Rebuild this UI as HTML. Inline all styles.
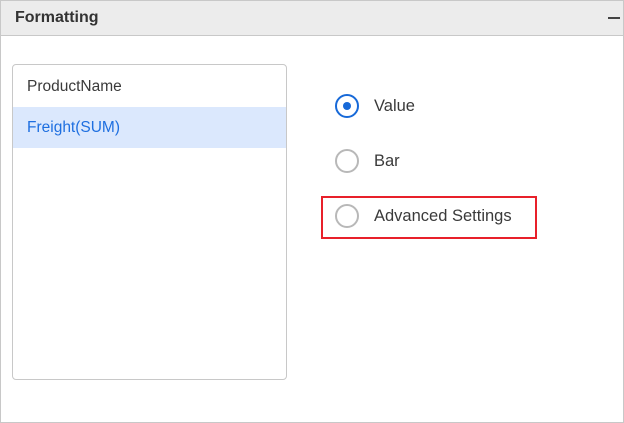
<!DOCTYPE html>
<html><head><style>
body{margin:0;width:624px;height:423px;overflow:hidden;background:#fff;font-family:"Liberation Sans",sans-serif;}
.outer{position:absolute;left:0;top:0;width:622px;height:421px;border:1px solid #c8c8c8;}
.hdr{position:absolute;left:0;top:0;width:622px;height:34px;background:#ececec;border-bottom:1px solid #c8c8c8;}
.title{position:absolute;left:14px;top:8px;font-size:16px;font-weight:bold;color:#333;}
.minus{position:absolute;left:607px;top:16px;width:12px;height:1.5px;background:#444;}
.list{position:absolute;left:12px;top:64px;width:273px;height:314px;border:1px solid #c8c8c8;border-radius:4px;overflow:hidden;}
.row{position:absolute;left:0;width:273px;height:41px;font-size:15.5px;line-height:42px;padding-left:14px;box-sizing:border-box;}
.r1{top:1px;color:#3a3a3a;}
.r2{top:42px;background:#dbe8fd;color:#1e6fe0;}
.rad{position:absolute;left:335px;width:20px;height:20px;border:2px solid #b8b8b8;border-radius:50%;}
.rad.on{border-color:#1769d8;}
.rad.on::after{content:"";position:absolute;left:6px;top:6px;width:8px;height:8px;border-radius:50%;background:#1769d8;}
.lbl{position:absolute;left:374px;font-size:16.5px;color:#3a3a3a;}
.red{position:absolute;left:321px;top:196px;width:212px;height:39px;border:2.5px solid #e8202a;}
</style></head><body>
<div class="outer">
<div class="hdr"><div class="title">Formatting</div><div class="minus"></div></div>
</div>
<div class="list"><div class="row r1">ProductName</div><div class="row r2">Freight(SUM)</div></div>
<div class="rad on" style="top:94px"></div><div class="lbl" style="top:97px">Value</div>
<div class="rad" style="top:149px"></div><div class="lbl" style="top:152px">Bar</div>
<div class="red"></div>
<div class="rad" style="top:204px"></div><div class="lbl" style="top:207px">Advanced Settings</div>
</body></html>
